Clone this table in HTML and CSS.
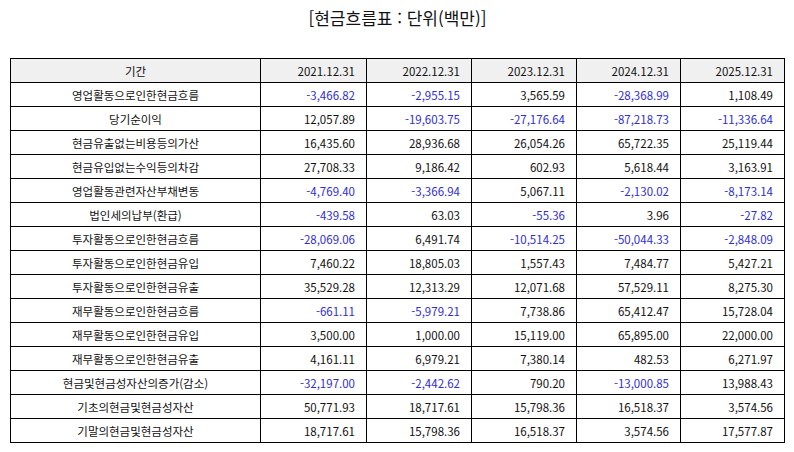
FILE: index.html
```html
<!DOCTYPE html>
<html lang="ko">
<head>
<meta charset="utf-8">
<link rel="stylesheet" href="styles.css">
</head>
<body>
<div class="page">
  <h1 class="title">[현금흐름표 : 단위(백만)]</h1>
  <div class="grid">
    <div class="row head"><div class="cell lbl">기간</div><div class="cell">2021.12.31</div><div class="cell">2022.12.31</div><div class="cell">2023.12.31</div><div class="cell">2024.12.31</div><div class="cell">2025.12.31</div></div>
    <div class="row"><div class="cell lbl">영업활동으로인한현금흐름</div><div class="cell neg">-3,466.82</div><div class="cell neg">-2,955.15</div><div class="cell">3,565.59</div><div class="cell neg">-28,368.99</div><div class="cell">1,108.49</div></div>
    <div class="row"><div class="cell lbl">당기순이익</div><div class="cell">12,057.89</div><div class="cell neg">-19,603.75</div><div class="cell neg">-27,176.64</div><div class="cell neg">-87,218.73</div><div class="cell neg">-11,336.64</div></div>
    <div class="row"><div class="cell lbl">현금유출없는비용등의가산</div><div class="cell">16,435.60</div><div class="cell">28,936.68</div><div class="cell">26,054.26</div><div class="cell">65,722.35</div><div class="cell">25,119.44</div></div>
    <div class="row"><div class="cell lbl">현금유입없는수익등의차감</div><div class="cell">27,708.33</div><div class="cell">9,186.42</div><div class="cell">602.93</div><div class="cell">5,618.44</div><div class="cell">3,163.91</div></div>
    <div class="row"><div class="cell lbl">영업활동관련자산부채변동</div><div class="cell neg">-4,769.40</div><div class="cell neg">-3,366.94</div><div class="cell">5,067.11</div><div class="cell neg">-2,130.02</div><div class="cell neg">-8,173.14</div></div>
    <div class="row"><div class="cell lbl">법인세의납부(환급)</div><div class="cell neg">-439.58</div><div class="cell">63.03</div><div class="cell neg">-55.36</div><div class="cell">3.96</div><div class="cell neg">-27.82</div></div>
    <div class="row"><div class="cell lbl">투자활동으로인한현금흐름</div><div class="cell neg">-28,069.06</div><div class="cell">6,491.74</div><div class="cell neg">-10,514.25</div><div class="cell neg">-50,044.33</div><div class="cell neg">-2,848.09</div></div>
    <div class="row"><div class="cell lbl">투자활동으로인한현금유입</div><div class="cell">7,460.22</div><div class="cell">18,805.03</div><div class="cell">1,557.43</div><div class="cell">7,484.77</div><div class="cell">5,427.21</div></div>
    <div class="row"><div class="cell lbl">투자활동으로인한현금유출</div><div class="cell">35,529.28</div><div class="cell">12,313.29</div><div class="cell">12,071.68</div><div class="cell">57,529.11</div><div class="cell">8,275.30</div></div>
    <div class="row"><div class="cell lbl">재무활동으로인한현금흐름</div><div class="cell neg">-661.11</div><div class="cell neg">-5,979.21</div><div class="cell">7,738.86</div><div class="cell">65,412.47</div><div class="cell">15,728.04</div></div>
    <div class="row"><div class="cell lbl">재무활동으로인한현금유입</div><div class="cell">3,500.00</div><div class="cell">1,000.00</div><div class="cell">15,119.00</div><div class="cell">65,895.00</div><div class="cell">22,000.00</div></div>
    <div class="row"><div class="cell lbl">재무활동으로인한현금유출</div><div class="cell">4,161.11</div><div class="cell">6,979.21</div><div class="cell">7,380.14</div><div class="cell">482.53</div><div class="cell">6,271.97</div></div>
    <div class="row"><div class="cell lbl">현금및현금성자산의증가(감소)</div><div class="cell neg">-32,197.00</div><div class="cell neg">-2,442.62</div><div class="cell">790.20</div><div class="cell neg">-13,000.85</div><div class="cell">13,988.43</div></div>
    <div class="row"><div class="cell lbl">기초의현금및현금성자산</div><div class="cell">50,771.93</div><div class="cell">18,717.61</div><div class="cell">15,798.36</div><div class="cell">16,518.37</div><div class="cell">3,574.56</div></div>
    <div class="row"><div class="cell lbl">기말의현금및현금성자산</div><div class="cell">18,717.61</div><div class="cell">15,798.36</div><div class="cell">16,518.37</div><div class="cell">3,574.56</div><div class="cell">17,577.87</div></div>
  </div>
</div>
</body>
</html>
```

FILE: styles.css
```css
html, body {
  margin: 0;
  padding: 0;
  background: #ffffff;
}

body {
  font-family: "Noto Sans CJK KR", "Noto Sans", sans-serif;
  color: #111111;
}

.page {
  padding: 6px 9px 0 10px;
}

.title {
  margin: 0 0 28px 0;
  font-size: 17px;
  font-weight: normal;
  line-height: 24px;
  text-align: center;
  color: #111111;
}

.grid {
  width: 775px;
  box-sizing: border-box;
  border-top: 1px solid #000000;
  border-left: 1px solid #000000;
  font-size: 11.5px;
}

.row {
  display: grid;
  grid-template-columns: 250px 106px 105px 105px 104px 104px;
  height: 24px;
}

.row.head {
  background: #f0f0f0;
}

.cell {
  box-sizing: border-box;
  border-right: 1px solid #000000;
  border-bottom: 1px solid #000000;
  padding: 0 11px 0 4px;
  display: flex;
  align-items: center;
  justify-content: flex-end;
  white-space: nowrap;
  line-height: 14px;
}

.row .lbl {
  justify-content: center;
  padding: 0 4px;
}

.neg {
  color: #2e2ed8;
}
```
